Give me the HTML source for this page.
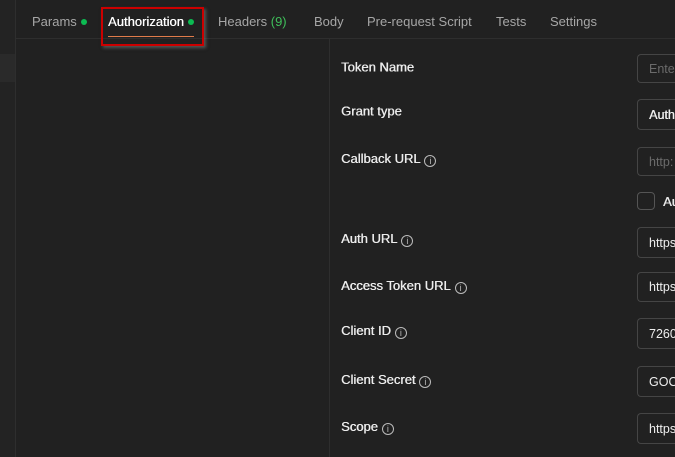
<!DOCTYPE html>
<html><head><meta charset="utf-8"><style>
*{margin:0;padding:0;box-sizing:border-box}
body{width:675px;height:457px;background:#212121;font-family:"Liberation Sans",sans-serif;position:relative;overflow:hidden;color:#e8e8e8}
.abs{position:absolute}
.tab{position:absolute;top:14px;font-size:13px;color:#a6a6a6;white-space:nowrap}
.dot{display:inline-block;width:6px;height:6px;border-radius:50%;background:#0cbb52;margin-left:4px;vertical-align:1px}
.lbl{position:absolute;left:341px;font-size:13px;color:#ececec;text-shadow:0.4px 0 0 #ececec;white-space:nowrap;transform:translateY(-50%)}
.info{display:inline-block;width:12px;height:12px;border:1px solid #bbb;border-radius:50%;font-size:9px;line-height:10px;text-align:center;color:#bbb;text-shadow:none;margin-left:4px;vertical-align:-1px}
.inp{position:absolute;left:637px;width:38px;border:1px solid #454545;border-right:none;border-radius:4px 0 0 4px;font-size:12.5px;padding-left:11px;display:flex;align-items:center;color:#eee;white-space:nowrap;overflow:hidden}
.ph{color:#6b6b6b}
</style></head><body>
<div class="abs" style="left:0;top:0;width:15px;height:457px;background:#232323"></div>
<div class="abs" style="left:0;top:54px;width:15px;height:28px;background:#2a2a2a"></div>
<div class="abs" style="left:15px;top:0;width:1px;height:457px;background:#2e2e2e"></div>
<div class="abs" style="left:16px;top:38px;width:659px;height:1px;background:#2e2e2e"></div>
<div class="abs" style="left:329px;top:39px;width:1px;height:418px;background:#2e2e2e"></div>

<div class="tab" style="left:32px">Params<span class="dot"></span></div>
<div class="tab" style="left:108px;color:#fff;text-shadow:0.3px 0 0 #fff">Authorization<span class="dot"></span></div>
<div class="abs" style="left:108px;top:36px;width:86px;height:1px;background:#e07b4a"></div>
<div class="abs" style="left:101px;top:7px;width:103px;height:39px;border:2px solid #c00;box-shadow:2px 2px 3px rgba(120,120,120,.6)"></div>
<div class="tab" style="left:218px">Headers <span style="color:#3fbf5a">(9)</span></div>
<div class="tab" style="left:314px">Body</div>
<div class="tab" style="left:367px">Pre-request Script</div>
<div class="tab" style="left:496px">Tests</div>
<div class="tab" style="left:550px">Settings</div>

<div class="lbl" style="top:67px">Token Name</div>
<div class="lbl" style="top:111px">Grant type</div>
<div class="lbl" style="top:159px">Callback URL<span class="info">i</span></div>
<div class="lbl" style="top:239px">Auth URL<span class="info">i</span></div>
<div class="lbl" style="top:286px">Access Token URL<span class="info">i</span></div>
<div class="lbl" style="top:331px">Client ID<span class="info">i</span></div>
<div class="lbl" style="top:380px">Client Secret<span class="info">i</span></div>
<div class="lbl" style="top:427px">Scope<span class="info">i</span></div>

<div class="inp" style="top:54px;height:29px"><span class="ph">Enter</span></div>
<div class="inp" style="top:99px;height:31px;text-shadow:0.4px 0 0 #eee">Authe</div>
<div class="inp" style="top:147px;height:29px"><span class="ph">http:</span></div>
<div class="abs" style="left:637px;top:192px;width:18px;height:18px;border:1px solid #555;border-radius:4px"></div>
<div class="abs" style="left:663px;top:194px;font-size:13px;text-shadow:0.4px 0 0 #eee;width:12px;overflow:hidden;white-space:nowrap">Au</div>
<div class="inp" style="top:227px;height:31px">https</div>
<div class="inp" style="top:272px;height:30px">https</div>
<div class="inp" style="top:318px;height:31px">7260</div>
<div class="inp" style="top:366px;height:31px">GOC</div>
<div class="inp" style="top:413px;height:31px">https</div>
</body></html>
